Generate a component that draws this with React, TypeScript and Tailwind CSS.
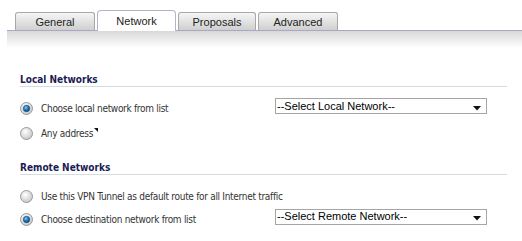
import React from "react";

function Tab({ label, active }: { label: string; active?: boolean }) {
  if (active) {
    return (
      <div className="relative z-10 -mb-px flex h-[21px] w-[79px] items-start justify-center rounded-t-[4px] border border-b-0 border-[#b4b4c8] bg-white pt-[2px] text-[11px] text-[#222]">
        {label}
      </div>
    );
  }
  return (
    <div className="flex h-[18px] items-start justify-center rounded-t-[3px] border border-b-0 border-[#a8a8a8] bg-gradient-to-b from-[#f6f6f6] to-[#cfcfcf] pt-[1px] text-[11px] text-[#222]">
      {label}
    </div>
  );
}

function Radio({ checked }: { checked?: boolean }) {
  return (
    <svg width="13" height="13" viewBox="0 0 13 13" className="shrink-0">
      <defs>
        <radialGradient id={checked ? "rgc" : "rgu"} cx="40%" cy="35%" r="70%">
          <stop offset="0%" stopColor="#ffffff" />
          <stop offset="100%" stopColor="#c4c4c4" />
        </radialGradient>
        <radialGradient id="dot" cx="40%" cy="35%" r="70%">
          <stop offset="0%" stopColor="#7fc6f4" />
          <stop offset="60%" stopColor="#1470b8" />
          <stop offset="100%" stopColor="#0b3d6e" />
        </radialGradient>
      </defs>
      <circle cx="6.5" cy="6.5" r="6" fill={`url(#${checked ? "rgc" : "rgu"})`} stroke="#9a9a9a" strokeWidth="1" />
      {checked && <circle cx="6.5" cy="6.5" r="3.2" fill="url(#dot)" stroke="#1e3f60" strokeWidth="0.6" />}
    </svg>
  );
}

function Select({ label }: { label: string }) {
  return (
    <div className="flex h-[16px] w-[212px] items-center justify-between border border-[#a5a5a5] bg-white pl-[1px] pr-[5px] text-[11px] leading-none text-black [font-family:'Liberation_Sans',Arial,sans-serif]">
      <span>{label}</span>
      <svg width="8" height="5" viewBox="0 0 8 5" className="mt-[4px]">
        <polygon points="0,0 8,0 4,4.5" fill="#111" />
      </svg>
    </div>
  );
}

function Heading({ children }: { children: React.ReactNode }) {
  return (
    <div className="mr-[15px] border-b border-[#d3dbe3] text-[10px] font-bold leading-[12px] text-[#1b1b55]">
      {children}
    </div>
  );
}

export default function App() {
  return (
    <div className="h-[241px] w-[522px] overflow-hidden bg-white text-[#333] [font-family:'DejaVu_Sans_Condensed','DejaVu_Sans',sans-serif]">
      <div className="flex items-end gap-[2px] pl-[15px] pt-[10px] [font-family:'Liberation_Sans',Arial,sans-serif]">
        <div className="w-[80px]"><Tab label="General" /></div>
        <Tab label="Network" active />
        <div className="w-[78px]"><Tab label="Proposals" /></div>
        <div className="w-[80px]"><Tab label="Advanced" /></div>
      </div>
      <div className="ml-[7px] h-[18px] border-t border-[#aaa8c4] bg-gradient-to-b from-[#d8d8d8] to-white" />

      <div className="pl-[20px]">
        <div className="mt-[26px]">
          <Heading>Local Networks</Heading>
        </div>
        <div className="mt-[13px] flex h-[16px] items-center">
          <Radio checked />
          <span className="ml-[8px] w-[234px] pt-[1px] text-[10px] tracking-[-0.3px]">Choose local network from list</span>
          <div className="-mt-[4px]"><Select label="--Select Local Network--" /></div>
        </div>
        <div className="mt-[9px] flex h-[16px] items-center">
          <Radio />
          <span className="ml-[8px] pt-[1px] text-[10px] tracking-[-0.3px]">Any address</span>
          <svg width="4" height="4" viewBox="0 0 4 4" className="-mt-[7px] ml-[1px]">
            <polygon points="0,0 4,0 4,4" fill="#111" />
          </svg>
        </div>

        <div className="mt-[21px]">
          <Heading>Remote Networks</Heading>
        </div>
        <div className="mt-[13px] flex h-[16px] items-center">
          <Radio />
          <span className="ml-[8px] pt-[1px] text-[10px] tracking-[-0.3px]">Use this VPN Tunnel as default route for all Internet traffic</span>
        </div>
        <div className="mt-[7px] flex h-[16px] items-center">
          <Radio checked />
          <span className="ml-[8px] w-[234px] pt-[1px] text-[10px] tracking-[-0.3px]">Choose destination network from list</span>
          <div className="-mt-[5px]"><Select label="--Select Remote Network--" /></div>
        </div>
      </div>
    </div>
  );
}
